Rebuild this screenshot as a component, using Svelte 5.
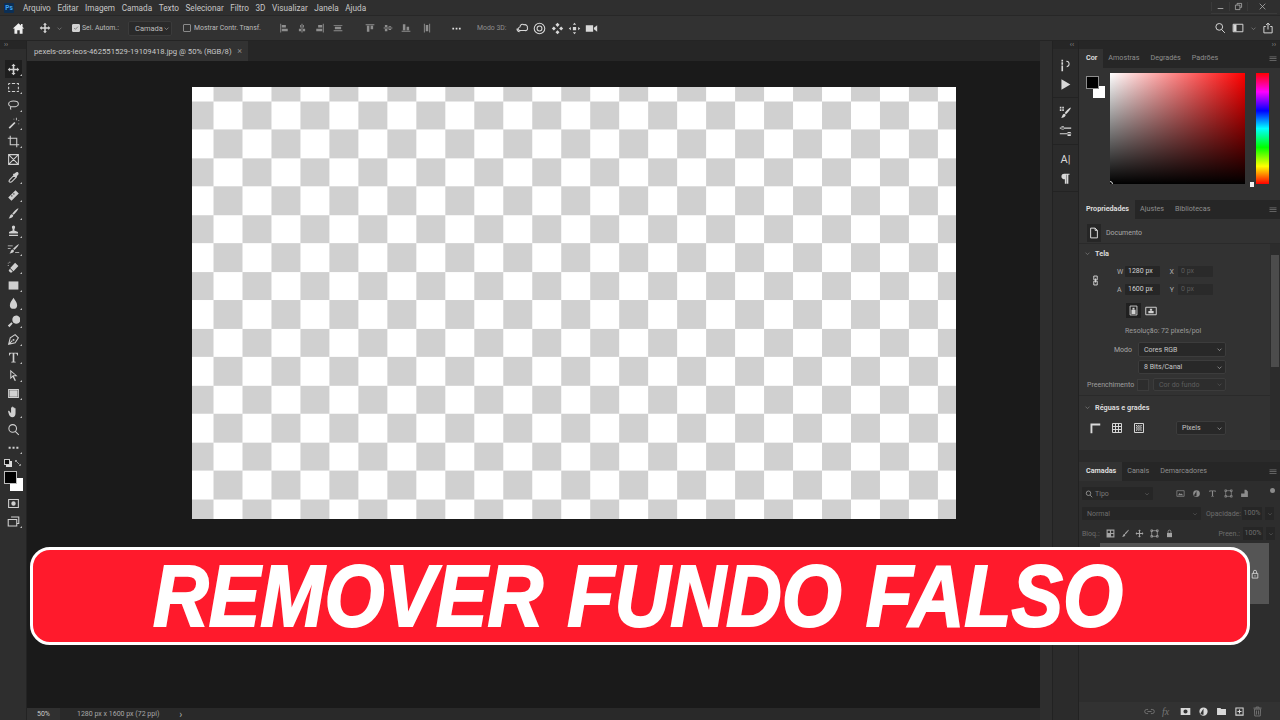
<script lang="ts">
  interface Icon {
    f?: string;
    s?: string;
  }

  const icons: Record<string, Icon> = {
    move: { f: "M8 1l2.6 2.6H9V7h3.4V5.4L15 8l-2.6 2.6V9H9v3.4h1.6L8 15l-2.6-2.6H7V9H3.6v1.6L1 8l2.6-2.6V7H7V3.6H5.4z" },
    marquee: { s: "M2 3h2M6 3h4M12 3h2v2M14 7v3M14 12v1h-2M10 13H6M4 13H2v-1M2 10V7M2 5V3" },
    lasso: { s: "M8 2.500c3.500 0 6 1.500 6 3.500s-3 3.600-6 3.600S2 8 2 6s2.500-3.500 6-3.500zM5 9.500c-1 1-1 2.500 0 3.500" },
    wand: { f: "M2 13l7-7 1.500 1.500-7 7zM11 1h1v3h-1zM14 4h1v1h-1zM8 2h1v1H8zM14 8h1v1h-1z" },
    crop: { s: "M4 1v11h11M1 4h11v11" },
    frame: { s: "M2 2h12v12H2zM2 2l12 12M14 2L2 14" },
    dropper: { s: "M3 13.500l-.5-.5c0-1 .5-2 1-2.500l5-5 2.500 2.500-5 5c-.5.5-1.500 1-2.500.5z", f: "M9 3.500l1.500-1.500c1-1 2.500-1 3.200-.2s.8 2.200-.2 3.200L12 6.500l.5.500-1.300 1.300-4-4L8.500 3z" },
    heal: { f: "M1.500 10.500l9-9 4 4-9 9zM5 8.500l1 1 1-1-1-1zM7.500 6l1 1 1-1-1-1z" },
    brush: { f: "M14 1.500c.5.500-3 5.500-6 8L6.500 8c2.500-3 7-7 7.500-6.500zM5.500 9c1.500 0 2.500 1 2 2.500-.5 1.500-3 2.500-5.500 2.500 1.500-1 1.500-4 3.500-5z" },
    stamp: { f: "M6 2.500a2 2 0 1 1 4 0c0 1.500-1 2-1 4 0 1 3 1 4.500 2v2h-11v-2C4 7.500 7 7.500 7 6.500c0-2-1-2.500-1-4zM2.500 12h11v1.500h-11z" },
    history: { f: "M14.500 1.500c.5.500-3 5-5.500 7L7.500 7c2.500-2.500 6.500-6 7-5.500zM6.500 8c1.500 0 2.200 1 2 2.300C8 12 5.500 13 3 13c1.500-1 1.500-4 3.500-5zM1 3h6v1H1zM1 6h3.500v1H1zM10 11h5v1h-5z" },
    eraser: { f: "M10 2l4 4-6 6.500-4-4zM3.500 9.500l3.500 3.500-1 1H4l-2-2zM1 2h1v1H1zM3 1h1v1H3zM1 5h1v1H1z" },
    gradient: { f: "M2 3h12v10H2z" },
    blur: { f: "M8 1c1 2.500 4.500 5.500 4.500 9a4.500 4.500 0 1 1-9 0C3.500 6.500 7 3.500 8 1z" },
    dodge: { f: "M10 1a5 5 0 1 1 0 9.500 5 5 0 0 1 0-9.500zM5.500 9l1.500 1.500-4 4.500-2-2z" },
    pen: { s: "M2 14l2-8 6-4 4 4-4 6zM2 14l4.500-4.500", f: "M7 7.500h2v2H7z" },
    type: { f: "M2.500 2h11v3.500h-1c-.2-1.500-.7-2.300-2.500-2.300H9v9.300c0 .6.700.8 1.700.8v.7H5.300V13.300c1 0 1.700-.2 1.700-.8V3.200H6c-1.800 0-2.300.8-2.500 2.300h-1z" },
    select: { f: "M4 1l9 8H8.500l2.500 5-1.500.7-2.500-5L4 12.500zM5.300 3.800v6l2-2h3z" },
    shape: { f: "M3 4h10v8H3z", s: "M2 3h12v10H2z" },
    hand: { f: "M5 7V3.500c0-1 1.300-1 1.300 0V2.500c0-1 1.400-1 1.400 0v1c0-1 1.400-1 1.400 0v1c0-1 1.400-1 1.400 0V10c0 3-1.500 5-4 5-2 0-3-1-4-3L1.500 8.500c-.5-1 .6-1.700 1.300-1L5 10z" },
    zoom: { s: "M7 2a4.700 4.700 0 1 1 0 9.400A4.700 4.700 0 0 1 7 2zM10.500 10.500L14.500 14.500" },
    dots: { f: "M2 7h2.500v2.500H2zM6.800 7h2.500v2.500H6.800zM11.500 7H14v2.500h-2.500z" },
    home: { f: "M8 1.500l3 2.700V2.500h2v3.500l2 2h-2v6.500H9.500V10h-3v4.500H3V8H1z" },
    quick: { s: "M2 3h12v10H2z", f: "M8 5.300a2.700 2.700 0 1 1 0 5.400 2.700 2.700 0 0 1 0-5.400z" },
    screen: { s: "M5 2.500h9.500v8H12M1.500 5.500H12v8H1.500z" },
    play: { f: "M3 1.500L14 8 3 14.500z" },
    chev: { s: "M3.500 6L8 10.500 12.500 6" },
    tick: { s: "M3 8l3.500 3.500L13 4.500" },
    search: { s: "M7 2a4.500 4.500 0 1 1 0 9A4.500 4.500 0 0 1 7 2zM10.200 10.200L14.500 14.500" },
    panels: { s: "M1.500 3h13v10h-13z", f: "M2 3.500h4v9H2z" },
    share: { s: "M5 6H2.500v8.500h11V6H11M8 10V1.500M5.500 4L8 1.500 10.500 4" },
    doc: { s: "M3.500 1.500h6l3 3v10h-9zM9.500 1.500v3h3" },
    actions: { f: "M3 1h2v2H3zM3 4h2v3H3zM3 8h2v7H3zM9 2c3 0 4.500 2 4 5-.3 2-2 3-3.500 3V8.500c1 0 2-.5 2.200-2C12 5 11 3.500 9 3.500z" },
    brushes: { f: "M14.500 2c.5.500-3 5.500-6 8L7 8.500C9.500 5.500 14 1.500 14.500 2zM6 9.500c1.500 0 2.500 1 2 2.500-.5 1.500-3 2.500-5.500 2.500 1.500-1 1.500-4 3.500-5zM1 1h2v2H1zM4 1h2v2H4zM1 4h2v2H1zM4 4h2v2H4z" },
    sliders: { f: "M1 3h14v1.500H1zM3 1.500h3v4H3zM1 10h14v1.500H1zM10.500 8.500h4v5h-4z" },
    pilcrow: { f: "M6.500 2H13v1.500h-1.500v11h-2v-11H9v11H7.200V9c-2.700 0-4.200-1.500-4.200-3.500S4 2 6.500 2z" },
    chain: { s: "M5.500 1.500h5v5.500h-5zM5.500 9h5v5.500h-5zM8 5v6" },
    portrait: { f: "M6.500 4h3v2.500h-3zM5 7h6v6H5z", s: "M3 1.500h10v13H3z" },
    landscape: { f: "M6.500 5h3v2.500h-3zM4.500 8h7v3h-7z", s: "M1 3h14v10H1z" },
    rulers: { f: "M2 2h13v2.500H4.500V15H2z" },
    grid: { s: "M2 2h12v12H2zM6 2v12M10 2v12M2 6h12M2 10h12" },
    guides: { s: "M2 2h12v12H2z", f: "M4 4h1.500v1.500H4zM7 4h1.500v1.500H7zM10 4h1.500v1.500H10zM5.500 5.500H7V7H5.500zM8.500 5.500H10V7H8.500zM4 7h1.500v1.500H4zM7 7h1.500v1.500H7zM10 7h1.500v1.500H10zM5.500 8.500H7V10H5.500zM8.500 8.500H10V10H8.500zM4 10h1.500v1.500H4zM7 10h1.500v1.500H7zM10 10h1.500v1.500H10z" },
    lock: { f: "M3.500 7h9v7.500h-9z", s: "M5.500 7V4.500a2.500 2.500 0 0 1 5 0V7" },
    lockOpen: { s: "M3.500 7h9v7.500h-9zM5.500 7V4.500a2.500 2.500 0 0 1 5 0V7M8 10v2" },
    image: { s: "M1.500 3h13v10h-13z", f: "M3.500 11l3-4 2 2.500 1.500-1.500 2.500 3z" },
    adjust: { f: "M8 2a6 6 0 1 1 0 12A6 6 0 0 1 8 2zM8 3.500L3.500 11c1 1.500 3 2 4.500 1.800z" },
    tGlyph: { f: "M2.500 2.500h11v3h-1c-.2-1-.6-1.700-2-1.700H9v8.200c0 .4.500.6 1.500.6v.9h-5v-.9c1 0 1.500-.2 1.500-.6V3.800H5.500c-1.400 0-1.800.7-2 1.700h-1z" },
    transform: { s: "M3 3h10v10H3zM1.500 1.500h3v3h-3zM11.500 1.500h3v3h-3zM1.500 11.500h3v3h-3zM11.500 11.500h3v3h-3z" },
    smart: { f: "M8 1.500h3l3 3V14H8zM2 8h6v6H2z" },
    alpha: { f: "M1 1h14v14H1zM3 3v4h4V3zM9 9v4h4V9zM9 3v4h4V3z" },
    link: { s: "M6 5H4a3 3 0 0 0 0 6h2M10 5h2a3 3 0 0 1 0 6h-2M5 8h6" },
    mask: { f: "M1 3h14v10H1zM8 5a3 3 0 1 0 0 6 3 3 0 0 0 0-6z" },
    folder: { f: "M1.500 3h5l1 1.500h7V13h-13z" },
    addLayer: { f: "M2 2h12v12H2zM3.500 3.500v9h9v-9zM7.200 5h1.600v2.200H11v1.600H8.800V11H7.200V8.800H5V7.200h2.200z" },
    trash: { s: "M3.500 4.500h9l-.5 10H4zM2 3h12M6 3V1.500h4V3M6.500 6.500v6M9.500 6.500v6" },
    menu: { f: "M1 3h14v1.500H1zM1 6.500h14V8H1zM1 10h14v1.500H1z" },
    arrows: { s: "M3 3h3M3 3v3M3 3l8 8M13 10v3M13 13h-3" },
    alignL: { f: "M2 1h1.500v14H2zM4.500 3H11v4H4.500zM4.500 9H14v4H4.500z" },
    alignC: { f: "M7.200 1h1.600v14H7.200zM5 3h6v4H5zM3 9h10v4H3z" },
    alignR: { f: "M12.500 1H14v14h-1.500zM5 3h6.500v4H5zM2 9h9.500v4H2z" },
    distH: { f: "M1 3h14v1.500H1zM1 11.500h14V13H1zM3 6h10v4H3z" },
    alignT: { f: "M1 2h14v1.500H1zM3 4.500h4V14H3zM9 4.500h4V10H9z" },
    alignM: { f: "M1 7.200h14v1.600H1zM3 3h4v10H3zM9 5h4v6H9z" },
    alignB: { f: "M1 12.500h14V14H1zM3 2h4v9.500H3zM9 6h4v5.500H9z" },
    distV: { f: "M3 1h1.500v14H3zM11.500 1H13v14h-1.500zM6 3h4v10H6z" },
    orbit: { s: "M5 6a3 3 0 0 1 5-2.500 3 3 0 0 1 4 3.500c1 2-1 4-3 3.500H6C3 11 .5 8 5 6zM1.500 8c-1 2 1 4 3 4" },
    roll: { s: "M8 1.500a6.500 6.500 0 1 1 0 13 6.500 6.500 0 0 1 0-13zM8 5a3 3 0 1 1 0 6 3 3 0 0 1 0-6z" },
    pan3d: { f: "M8 1l2.500 2.500-2.500 2.500-2.500-2.500zM8 10l2.500 2.500L8 15l-2.500-2.500zM1 8l2.500-2.500L6 8l-2.500 2.500zM10 8l2.500-2.500L15 8l-2.500 2.500z" },
    slide3d: { f: "M6 6h4v4H6zM8 1l2 2.500H6zM8 15l-2-2.500h4zM1 8l2.500-2v4zM15 8l-2.500 2V6z" },
    camera: { f: "M1 4h9v8H1zM11 7l4-3v8l-4-3z" },
    minimize: { f: "M3 11h10v1.500H3z" },
    restore: { s: "M5.500 5V2.500h8v7H11M2.500 5.500h8v8h-8z" },
    close: { s: "M3 3l10 10M13 3L3 13" },
  };

  const tools = [
    "move", "marquee", "lasso", "wand", "crop", "frame", "dropper", "heal", "brush", "stamp", "history",
    "eraser", "gradient", "blur", "dodge", "pen", "type", "select", "shape", "hand", "zoom", "dots",
  ];
  const noCorner = ["frame", "zoom"];
  const menus = ["Arquivo", "Editar", "Imagem", "Camada", "Texto", "Selecionar", "Filtro", "3D", "Visualizar", "Janela", "Ajuda"];
  const dockGroups = [["actions", "play"], ["brushes", "sliders"], ["type-a", "pilcrow"]];
  const footer = ["link", "fx", "mask", "adjust", "folder", "addLayer", "trash"];
</script>

{#snippet ic(name: string, size = 12)}
  <svg class="ic" width={size} height={size} viewBox="0 0 16 16">
    {#if icons[name]?.f}<path d={icons[name].f} fill="currentColor" fill-rule="evenodd" />{/if}
    {#if icons[name]?.s}<path d={icons[name].s} fill="none" stroke="currentColor" stroke-width="1.300" />{/if}
  </svg>
{/snippet}

{#snippet tabs(names: string[], cls = "")}
  <div class="tabbar {cls}">
    {#each names as name, i}
      <span class="tab" class:active={i === 0}>{name}</span>
    {/each}
    <span class="tab-menu">{@render ic("menu", 8)}</span>
  </div>
{/snippet}

<div class="app">
  <!-- Menu bar -->
  <header class="menubar">
    <span class="ps-logo">Ps</span>
    {#each menus as m}
      <span class="menu-item">{m}</span>
    {/each}
    <div class="window-btns">
      <span class="win">{@render ic("minimize", 9)}</span>
      <span class="win">{@render ic("restore", 9)}</span>
      <span class="win close">{@render ic("close", 9)}</span>
    </div>
  </header>

  <!-- Options bar -->
  <div class="options">
    <span class="opt home">{@render ic("home", 13)}</span>
    <span class="opt move-opt">{@render ic("move", 12)}</span>
    <span class="mini-chev">{@render ic("chev", 7)}</span>
    <span class="check on">{@render ic("tick", 6)}</span>
    <span class="opt-text auto">Sel. Autom.:</span>
    <span class="opt-select">Camada {@render ic("chev", 7)}</span>
    <span class="check"></span>
    <span class="opt-text transf">Mostrar Contr. Transf.</span>
    <div class="align-group">
      {#each ["alignL", "alignC", "alignR", "distH"] as n}
        <span class="opt dim">{@render ic(n, 10)}</span>
      {/each}
    </div>
    <div class="align-group second">
      {#each ["alignT", "alignM", "alignB"] as n}
        <span class="opt dim">{@render ic(n, 10)}</span>
      {/each}
      <span class="opt dim last">{@render ic("distV", 10)}</span>
    </div>
    <span class="opt more">{@render ic("dots", 11)}</span>
    <span class="opt-text mode3d">Modo 3D:</span>
    <div class="group-3d">
      {#each ["orbit", "roll", "pan3d", "slide3d", "camera"] as n}
        <span class="opt">{@render ic(n, 13)}</span>
      {/each}
    </div>
    <div class="options-right">
      <span class="opt">{@render ic("search", 12)}</span>
      <span class="opt">{@render ic("panels", 12)}</span>
      <span class="mini-chev wide">{@render ic("chev", 7)}</span>
      <span class="opt">{@render ic("share", 12)}</span>
    </div>
  </div>

  <div class="workspace">
    <!-- Tools -->
    <aside class="toolbar">
      <div class="strip"><span class="strip-arrows">››</span></div>
      <div class="tools">
        {#each tools as t, i}
          <span class="tool" class:selected={i === 0}>
            {@render ic(t, 13)}
            {#if !noCorner.includes(t)}<i class="corner"></i>{/if}
          </span>
        {/each}
      </div>
      <div class="swap-row">
        <span class="swap-a"></span>
        <span class="swap-b">{@render ic("arrows", 8)}</span>
      </div>
      <div class="swatches">
        <span class="sw-bg"></span>
        <span class="sw-fg"></span>
      </div>
      <span class="tool low">{@render ic("quick", 13)}</span>
      <span class="tool">{@render ic("screen", 13)}<i class="corner"></i></span>
    </aside>

    <!-- Document -->
    <main class="doc">
      <div class="doc-tabs">
        <div class="doc-tab">
          <span>pexels-oss-leos-462551529-19109418.jpg @ 50% (RGB/8)</span>
          <span class="x">×</span>
        </div>
      </div>
      <div class="doc-body">
        <div class="canvas"></div>
      </div>
      <footer class="status">
        <span class="zoom-box">50%</span>
        <span class="status-text">1280 px x 1600 px (72 ppi)</span>
        <span class="status-chev">›</span>
      </footer>
    </main>
    <div class="gutter"></div>

    <!-- Dock -->
    <aside class="dock">
      <div class="strip dock-strip"><span class="strip-arrows">‹‹</span></div>
      {#each dockGroups as group}
        <div class="dock-group">
          {#each group as n}
            <span class="dock-icon">
              {#if n === "type-a"}<span class="a-glyph">A|</span>{:else}{@render ic(n, 13)}{/if}
            </span>
          {/each}
        </div>
      {/each}
    </aside>

    <!-- Panels -->
    <aside class="panels">
      <div class="strip right-strip"><span class="strip-arrows">››</span></div>

      {@render tabs(["Cor", "Amostras", "Degradês", "Padrões"])}
      <section class="color-panel">
        <div class="color-swatches">
          <span class="c-bg"></span>
          <span class="c-fg"></span>
        </div>
        <div class="color-field"><i class="picker"></i></div>
        <div class="hue"><i class="hue-mark"></i></div>
      </section>

      {@render tabs(["Propriedades", "Ajustes", "Bibliotecas"])}
      <section class="props">
        <div class="doc-row">
          <span class="doc-ico">{@render ic("doc", 12)}</span>
          <span>Documento</span>
        </div>
        <div class="props-body">
          <div class="props-scroll"><i class="thumb"></i></div>
          <div class="sec-head">{@render ic("chev", 7)}<b>Tela</b></div>
          <div class="size-grid">
            <span class="chain">{@render ic("chain", 11)}</span>
            <span class="cap">W</span><span class="inp">1280 px</span>
            <span class="cap far">X</span><span class="inp off">0 px</span>
            <span class="cap">A</span><span class="inp">1600 px</span>
            <span class="cap far">Y</span><span class="inp off">0 px</span>
          </div>
          <div class="orient">
            <span class="or-btn on">{@render ic("portrait", 11)}</span>
            <span class="or-btn">{@render ic("landscape", 12)}</span>
          </div>
          <div class="resolution">Resolução: 72 pixels/pol</div>
          <div class="form-row">
            <span class="lbl">Modo</span>
            <span class="sel">Cores RGB {@render ic("chev", 7)}</span>
          </div>
          <div class="form-row tight">
            <span class="lbl"></span>
            <span class="sel">8 Bits/Canal {@render ic("chev", 7)}</span>
          </div>
          <div class="fill-row">
            <span class="fill-lbl">Preenchimento</span>
            <span class="fill-sw"></span>
            <span class="sel off">Cor do fundo {@render ic("chev", 7)}</span>
          </div>
          <div class="sec-head rule">{@render ic("chev", 7)}<b>Réguas e grades</b></div>
          <div class="rulers">
            <span class="ru">{@render ic("rulers", 12)}</span>
            <span class="ru">{@render ic("grid", 12)}</span>
            <span class="ru">{@render ic("guides", 12)}</span>
            <span class="sel small">Pixels {@render ic("chev", 7)}</span>
          </div>
        </div>
      </section>

      {@render tabs(["Camadas", "Canais", "Demarcadores"], "layers-tabs")}
      <section class="layers">
        <div class="filter-row">
          <span class="l-sel tipo">{@render ic("search", 8)} Tipo {@render ic("chev", 6)}</span>
          <div class="filter-icons">
            {#each ["image", "adjust", "tGlyph", "transform", "smart"] as n}
              {@render ic(n, 9)}
            {/each}
          </div>
          <i class="toggle"></i>
        </div>
        <div class="blend-row">
          <span class="l-sel normal">Normal {@render ic("chev", 6)}</span>
          <span class="l-lbl">Opacidade:</span>
          <span class="pct">100%</span>
          <span class="pct-chev">{@render ic("chev", 6)}</span>
        </div>
        <div class="lock-row">
          <span class="l-lbl bloq">Bloq.:</span>
          <div class="lock-icons">
            {#each ["alpha", "brush", "move", "transform", "lock"] as n}
              {@render ic(n, 9)}
            {/each}
          </div>
          <span class="l-lbl fill-right">Preen.:</span>
          <span class="pct">100%</span>
          <span class="pct-chev">{@render ic("chev", 6)}</span>
        </div>
        <div class="layer-row">
          <span class="layer-lock">{@render ic("lockOpen", 10)}</span>
        </div>
        <div class="layers-fill"></div>
        <div class="layers-foot">
          {#each footer as n}
            {#if n === "fx"}
              <em class="fx">fx</em>
            {:else}
              <span class="foot-ico" class:dim={n === "link" || n === "trash"}>{@render ic(n, 11)}</span>
            {/if}
          {/each}
        </div>
      </section>
    </aside>
  </div>

  <!-- Thumbnail banner -->
  <div class="banner">
    <span>REMOVER FUNDO FALSO</span>
  </div>
</div>

<style>
  :global(body) {
    margin: 0;
    background: #1a1a1a;
  }

  .app {
    position: relative;
    width: 1280px;
    height: 720px;
    overflow: hidden;
    display: flex;
    flex-direction: column;
    font-family: Roboto, "Open Sans", sans-serif;
    font-size: 8px;
    color: #c4c4c4;
    background: #262626;
  }

  .ic {
    display: block;
    flex: none;
  }

  /* ── Menu bar ── */
  .menubar {
    height: 16px;
    box-sizing: border-box;
    flex: none;
    display: flex;
    align-items: center;
    background: #2f2f2f;
    padding-left: 4px;
    font-size: 8.200px;
    border-bottom: 1px solid #272727;
  }
  .ps-logo {
    width: 10px;
    height: 10px;
    margin-right: 9px;
    background: #0c2f55;
    color: #3fa5f5;
    font-size: 6.500px;
    font-weight: 700;
    line-height: 10px;
    text-align: center;
    border-radius: 1px;
  }
  .menu-item {
    margin-right: 6.600px;
    color: #c8c8c8;
  }
  .window-btns {
    margin-left: auto;
    margin-right: 3px;
    display: flex;
    align-self: flex-start;
    height: 13px;
    align-items: center;
    border-bottom: 1px solid #3a3a3a;
    color: #b8b8b8;
  }
  .win {
    width: 18px;
    display: flex;
    justify-content: center;
    border-left: 1px solid #3a3a3a;
    box-sizing: border-box;
  }
  .win.close {
    width: 30px;
  }

  /* ── Options bar ── */
  .options {
    height: 25px;
    box-sizing: border-box;
    flex: none;
    display: flex;
    align-items: center;
    background: #323232;
    font-size: 7.500px;
    color: #bcbcbc;
    border-bottom: 1px solid #242424;
  }
  .opt {
    width: 18px;
    flex: none;
    display: flex;
    justify-content: center;
    color: #d8d8d8;
  }
  .opt.dim {
    color: #8e8e8e;
  }
  .home {
    margin-left: 9px;
    color: #efefef;
  }
  .move-opt {
    margin-left: 9px;
  }
  .mini-chev {
    width: 10px;
    display: flex;
    justify-content: center;
    color: #9a9a9a;
  }
  .mini-chev.wide {
    width: 12px;
  }
  .check {
    width: 8px;
    height: 8px;
    margin-right: 3px;
    box-sizing: border-box;
    border: 1px solid #8a8a8a;
    border-radius: 1px;
    flex: none;
  }
  .check.on {
    background: #d2d2d2;
    border-color: #d2d2d2;
    margin-left: 8px;
    margin-right: 2px;
    color: #2a2a2a;
  }
  .opt-text {
    white-space: nowrap;
  }
  .auto {
    width: 36px;
    font-size: 6.900px;
  }
  .transf {
    width: 66px;
    font-size: 6.900px;
  }
  .opt-select {
    display: flex;
    align-items: center;
    justify-content: space-between;
    width: 44px;
    height: 15px;
    margin: 0 11px 0 10px;
    padding: 0 3px 0 6px;
    box-sizing: border-box;
    background: #2a2a2a;
    border: 1px solid #3b3b3b;
    border-radius: 2px;
    flex: none;
  }
  .align-group {
    display: flex;
    margin-left: 15px;
  }
  .align-group.second {
    margin-left: 14px;
  }
  .align-group .last {
    margin-left: 3px;
  }
  .more {
    margin-left: 11px;
    color: #e4e4e4;
  }
  .mode3d {
    margin-left: 12px;
    width: 28px;
    font-size: 6.900px;
    color: #8e8e8e;
  }
  .group-3d {
    display: flex;
    margin-left: 9px;
  }
  .group-3d .opt {
    width: 17.300px;
  }
  .options-right {
    margin-left: auto;
    margin-right: 3px;
    display: flex;
    align-items: center;
  }

  /* ── Workspace ── */
  .workspace {
    flex: 1;
    display: flex;
    min-height: 0;
  }
  .strip {
    height: 8px;
    flex: none;
    background: #262626;
    display: flex;
    align-items: center;
    color: #8f8f8f;
  }
  .strip-arrows {
    font-size: 7px;
    line-height: 8px;
    padding: 0 4px;
  }

  .toolbar {
    width: 27px;
    flex: none;
    display: flex;
    flex-direction: column;
    align-items: center;
    background: #2e2e2e;
    border-right: 1px solid #232323;
    box-sizing: border-box;
  }
  .toolbar .strip {
    width: 100%;
  }
  .tools {
    display: flex;
    flex-direction: column;
    margin-top: 11px;
  }
  .tool {
    position: relative;
    width: 17px;
    height: 18px;
    display: flex;
    align-items: center;
    justify-content: center;
    color: #d0d0d0;
  }
  .tool.selected {
    background: #1e1e1e;
  }
  .tool.low {
    margin-top: 3px;
  }
  .corner {
    position: absolute;
    right: 0;
    bottom: 2px;
    border-left: 2px solid transparent;
    border-bottom: 2px solid #c0c0c0;
  }
  .swap-row {
    width: 18px;
    display: flex;
    justify-content: space-between;
    margin-top: 3px;
    height: 8px;
  }
  .swap-a {
    width: 6px;
    height: 6px;
    background: #111;
    border: 1px solid #ccc;
    box-sizing: border-box;
    box-shadow: 2px 2px 0 #ddd;
  }
  .swap-b {
    color: #cfcfcf;
  }
  .swatches {
    position: relative;
    width: 19px;
    height: 20px;
    margin-top: 4px;
  }
  .sw-bg,
  .sw-fg {
    position: absolute;
    width: 13px;
    height: 13px;
  }
  .sw-bg {
    right: 0;
    bottom: 0;
    background: #fff;
  }
  .sw-fg {
    left: 0;
    top: 0;
    background: #000;
    border: 1px solid #bdbdbd;
    box-sizing: border-box;
  }

  /* ── Document ── */
  .doc {
    width: 1013px;
    flex: none;
    display: flex;
    flex-direction: column;
    background: #1a1a1a;
  }
  .doc-tabs {
    height: 20px;
    flex: none;
    background: #262626;
    display: flex;
  }
  .doc-tab {
    width: 221px;
    background: #323232;
    display: flex;
    align-items: center;
    justify-content: space-between;
    padding: 0 6px 0 7px;
    box-sizing: border-box;
    color: #c8c8c8;
    font-size: 7.700px;
    white-space: nowrap;
  }
  .x {
    color: #8c8c8c;
    font-size: 9px;
  }
  .doc-body {
    flex: 1;
    padding: 26px 0 0 165px;
  }
  .canvas {
    width: 764px;
    height: 432px;
    background-color: #fff;
    background-image: repeating-conic-gradient(#d0d0d0 0 25%, #fff 0 50%);
    background-size: 57.96px 56.86px;
    background-position: -7.480px -14.430px;
  }
  .status {
    height: 12px;
    flex: none;
    display: flex;
    align-items: center;
    background: #292929;
    font-size: 7px;
    color: #a8a8a8;
  }
  .zoom-box {
    width: 33px;
    padding-left: 10px;
    box-sizing: border-box;
    height: 100%;
    line-height: 12px;
    background: #303030;
    color: #cacaca;
  }
  .status-text {
    margin-left: 17px;
  }
  .status-chev {
    margin-left: 20px;
    font-size: 10px;
  }

  .gutter {
    width: 13px;
    flex: none;
    background: #2e2e2e;
    border-right: 1px solid #222;
    box-sizing: border-box;
  }

  /* ── Icon dock ── */
  .dock {
    width: 26px;
    flex: none;
    background: #2b2b2b;
    border-right: 1px solid #222;
    box-sizing: border-box;
  }
  .dock-strip {
    justify-content: flex-end;
    background: #262626;
    margin-bottom: 2px;
  }
  .dock-group {
    display: flex;
    flex-direction: column;
    align-items: center;
    padding: 5px 0 3px;
    border-bottom: 1px solid #232323;
  }
  .dock-icon {
    height: 19px;
    display: flex;
    align-items: center;
    justify-content: center;
    color: #d8d8d8;
  }
  .a-glyph {
    font-size: 11px;
  }

  /* ── Panels ── */
  .panels {
    flex: 1;
    display: flex;
    flex-direction: column;
    background: #2b2b2b;
    min-width: 0;
  }
  .right-strip {
    justify-content: flex-end;
  }
  .tabbar {
    height: 19px;
    flex: none;
    display: flex;
    background: #262626;
    align-items: stretch;
    font-size: 7.200px;
    color: #8e8e8e;
  }
  .tab {
    display: flex;
    align-items: center;
    padding: 0 5.500px 2px;
  }
  .tab.active {
    background: #323232;
    color: #e2e2e2;
    font-weight: 600;
    padding-left: 7px;
  }
  .tab-menu {
    margin-left: auto;
    align-self: center;
    padding-right: 3px;
    color: #777;
  }

  .color-panel {
    height: 132px;
    flex: none;
    display: flex;
    background: #323232;
    position: relative;
    box-sizing: border-box;
    padding: 5px 0 0 31px;
  }
  .color-swatches {
    position: absolute;
    left: 7px;
    top: 8px;
    width: 20px;
    height: 22px;
  }
  .c-bg,
  .c-fg {
    position: absolute;
  }
  .c-bg {
    right: 1px;
    bottom: 0;
    width: 12px;
    height: 12px;
    background: #fff;
  }
  .c-fg {
    left: 0;
    top: 0;
    width: 11px;
    height: 11px;
    background: #000;
    border: 1px solid #8d8d8d;
    box-sizing: content-box;
  }
  .color-field {
    position: relative;
    width: 135px;
    height: 111px;
    background: linear-gradient(to top, #000, rgba(0, 0, 0, 0)), linear-gradient(to right, #fff, #f00);
  }
  .picker {
    position: absolute;
    left: -3px;
    bottom: -3px;
    width: 6px;
    height: 6px;
    border: 1px solid #ddd;
    border-radius: 50%;
    box-sizing: border-box;
    clip-path: inset(0 0 3px 3px);
  }
  .hue {
    position: relative;
    width: 13px;
    height: 111px;
    margin-left: 11px;
    background: linear-gradient(to bottom, #f00, #f0f 17%, #00f 34%, #0ff 50%, #0f0 67%, #ff0 84%, #f00);
  }
  .hue-mark {
    position: absolute;
    left: -6px;
    bottom: -3px;
    width: 4px;
    height: 5px;
    background: #f0f0f0;
  }

  .props {
    flex: none;
    height: 231px;
    background: #323232;
    display: flex;
    flex-direction: column;
    font-size: 7px;
    color: #b4b4b4;
  }
  .doc-row {
    height: 25px;
    flex: none;
    display: flex;
    align-items: center;
    gap: 5px;
    padding: 3px 0 0 8px;
    box-sizing: border-box;
    border-bottom: 1px solid #2a2a2a;
    color: #a8a8a8;
  }
  .doc-ico {
    width: 14px;
    height: 18px;
    display: flex;
    align-items: center;
    justify-content: center;
    background: #262626;
    color: #ddd;
  }
  .props-body {
    position: relative;
    flex: 1;
  }
  .props-scroll {
    position: absolute;
    right: 0;
    top: 0;
    bottom: 10px;
    width: 10px;
    background: #2c2c2c;
  }
  .thumb {
    position: absolute;
    left: 1px;
    right: 1px;
    top: 11px;
    height: 112px;
    background: #4c4c4c;
  }
  .sec-head {
    display: flex;
    align-items: center;
    gap: 4px;
    padding: 3px 0 0 5px;
    height: 12px;
    color: #dadada;
    font-size: 7.300px;
  }
  .sec-head.rule {
    margin-top: 4px;
    padding-top: 5px;
    border-top: 1px solid #2a2a2a;
    height: 13px;
  }
  .sec-head :global(svg) {
    color: #909090;
  }
  .size-grid {
    display: grid;
    grid-template-columns: 27px 8px 35px 18px 35px;
    grid-auto-rows: 11px;
    row-gap: 7px;
    margin: 7px 0 0 11px;
    align-items: center;
    justify-items: start;
  }
  .cap {
    justify-self: start;
    color: #b0b0b0;
  }
  .cap.far {
    justify-self: end;
    padding-right: 4px;
  }
  .chain {
    grid-row: span 2;
    grid-column: 1;
    justify-self: start;
    color: #dedede;
  }
  .inp {
    width: 35px;
    height: 11px;
    padding-left: 3px;
    box-sizing: border-box;
    line-height: 11px;
    background: #262626;
    color: #d2d2d2;
    border-radius: 1px;
  }
  .inp.off {
    background: #2a2a2a;
    color: #5c5c5c;
  }
  .orient {
    display: flex;
    gap: 2px;
    margin: 8px 0 0 47px;
  }
  .or-btn {
    width: 15px;
    height: 15px;
    display: flex;
    align-items: center;
    justify-content: center;
    color: #d2d2d2;
  }
  .or-btn.on {
    background: #202020;
  }
  .resolution {
    margin: 9px 0 0 46px;
    color: #9c9c9c;
  }
  .form-row {
    display: flex;
    align-items: center;
    margin-top: 7px;
    height: 15px;
  }
  .form-row.tight {
    margin-top: 3px;
    height: 14px;
  }
  .lbl {
    width: 59px;
    padding-right: 6px;
    box-sizing: border-box;
    text-align: right;
    color: #a8a8a8;
  }
  .sel {
    display: flex;
    align-items: center;
    justify-content: space-between;
    width: 88px;
    height: 100%;
    padding: 0 2px 0 5px;
    box-sizing: border-box;
    background: #282828;
    border: 1px solid #3c3c3c;
    border-radius: 2px;
    color: #c6c6c6;
  }
  .sel.off {
    width: 73px;
    color: #5e5e5e;
    background: #2d2d2d;
  }
  .sel.small {
    width: 50px;
    height: 14px;
    margin-left: 21px;
  }
  .fill-row {
    display: flex;
    align-items: center;
    height: 13px;
    margin-top: 4px;
    padding-left: 8px;
  }
  .fill-lbl {
    width: 50px;
    color: #9e9e9e;
  }
  .fill-sw {
    width: 12px;
    height: 12px;
    box-sizing: border-box;
    margin-right: 4px;
    background: #2d2d2d;
    border: 1px solid #3c3c3c;
  }
  .rulers {
    display: flex;
    align-items: center;
    margin-top: 7px;
    padding-left: 10px;
  }
  .ru {
    width: 22px;
    display: flex;
    color: #dadada;
  }

  .layers-tabs {
    margin-top: 12px;
  }
  .layers {
    flex: 1;
    display: flex;
    flex-direction: column;
    background: #2d2d2d;
    min-height: 0;
    font-size: 7px;
    color: #6e6e6e;
  }
  .filter-row,
  .blend-row,
  .lock-row {
    display: flex;
    align-items: center;
    height: 13px;
    padding-left: 3px;
    flex: none;
    margin-top: 7px;
    white-space: nowrap;
  }
  .filter-row {
    margin-top: 6px;
  }
  .l-sel {
    display: flex;
    align-items: center;
    gap: 2px;
    height: 13px;
    padding: 0 3px 0 5px;
    box-sizing: border-box;
    background: #262626;
    border-radius: 1px;
  }
  .l-sel :global(svg:last-child) {
    margin-left: auto;
  }
  .tipo {
    width: 71px;
    padding-left: 3px;
    color: #7a7a7a;
  }
  .tipo :global(svg:first-child) {
    color: #bbb;
  }
  .filter-icons {
    display: flex;
    gap: 7px;
    margin-left: 23px;
    color: #8c8c8c;
  }
  .toggle {
    width: 5px;
    height: 5px;
    margin: -6px 0 0 21px;
    background: #8c8c8c;
    border-radius: 50%;
  }
  .normal {
    width: 119px;
  }
  .blend-row .l-lbl {
    margin-left: 5px;
    width: 33px;
  }
  .pct {
    width: 20px;
    height: 13px;
    line-height: 13px;
    margin-left: 3px;
    text-align: center;
    background: #262626;
  }
  .pct-chev {
    width: 9px;
    display: flex;
    justify-content: center;
    height: 13px;
    align-items: center;
    margin-left: 3px;
    background: #262626;
  }
  .bloq {
    width: 24px;
  }
  .lock-icons {
    display: flex;
    gap: 5.700px;
    color: #a4a4a4;
  }
  .fill-right {
    margin-left: auto;
  }
  .lock-row {
    padding-right: 5px;
  }
  .layer-row {
    margin: 3px 11px 0 21px;
    height: 61px;
    flex: none;
    background: #555;
    display: flex;
    align-items: center;
    justify-content: flex-end;
    padding-right: 9px;
    color: #ddd;
  }
  .layers-fill {
    flex: 1;
  }
  .layers-foot {
    height: 18px;
    flex: none;
    background: #323232;
    display: flex;
    align-items: center;
    justify-content: flex-end;
    gap: 7px;
    padding-right: 17px;
    color: #d8d8d8;
  }
  .foot-ico {
    width: 11px;
  }
  .foot-ico.dim,
  .fx {
    color: #777;
  }
  .fx {
    font-family: "Liberation Serif", serif;
    font-size: 10px;
    width: 11px;
  }

  /* ── Banner ── */
  .banner {
    position: absolute;
    left: 30px;
    top: 547px;
    width: 1220px;
    height: 98px;
    box-sizing: border-box;
    background: #ff1a2c;
    border: 3px solid #fff;
    border-radius: 20px;
    display: flex;
    align-items: center;
    justify-content: center;
    color: #fff;
    font-family: "Liberation Sans", Arial, sans-serif;
    font-size: 88px;
    font-style: italic;
    font-weight: 700;
    word-spacing: 3px;
    white-space: nowrap;
    line-height: 1;
  }
  .banner span {
    display: block;
    margin-left: -3px;
    -webkit-text-stroke: 2px #fff;
    transform: scaleX(0.877);
  }
</style>
